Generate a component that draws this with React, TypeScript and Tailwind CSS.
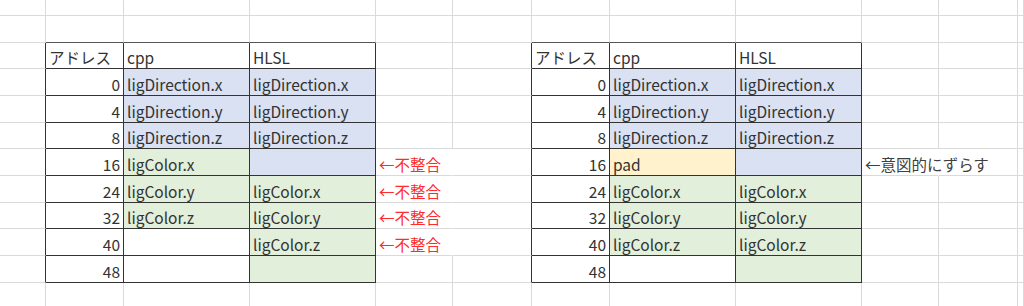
const FONT = "font-['Noto_Sans_CJK_JP',sans-serif]";

const BLUE = 'bg-[#d9e1f2]';
const GREEN = 'bg-[#e2efda]';
const YELLOW = 'bg-[#fff2cc]';

type Cell = { text?: string; bg?: string; align?: 'left' | 'right'; tone?: 'red' | 'gray' };

// one table = 9 rows x 3 cols (address, cpp, HLSL)
const leftTable: Cell[][] = [
  [{ text: 'アドレス' }, { text: 'cpp' }, { text: 'HLSL' }],
  [{ text: '0', align: 'right' }, { text: 'ligDirection.x', bg: BLUE }, { text: 'ligDirection.x', bg: BLUE }],
  [{ text: '4', align: 'right' }, { text: 'ligDirection.y', bg: BLUE }, { text: 'ligDirection.y', bg: BLUE }],
  [{ text: '8', align: 'right' }, { text: 'ligDirection.z', bg: BLUE }, { text: 'ligDirection.z', bg: BLUE }],
  [{ text: '16', align: 'right' }, { text: 'ligColor.x', bg: GREEN }, { bg: BLUE }],
  [{ text: '24', align: 'right' }, { text: 'ligColor.y', bg: GREEN }, { text: 'ligColor.x', bg: GREEN }],
  [{ text: '32', align: 'right' }, { text: 'ligColor.z', bg: GREEN }, { text: 'ligColor.y', bg: GREEN }],
  [{ text: '40', align: 'right' }, {}, { text: 'ligColor.z', bg: GREEN }],
  [{ text: '48', align: 'right' }, {}, { bg: GREEN }],
];

const rightTable: Cell[][] = [
  [{ text: 'アドレス' }, { text: 'cpp' }, { text: 'HLSL' }],
  [{ text: '0', align: 'right' }, { text: 'ligDirection.x', bg: BLUE }, { text: 'ligDirection.x', bg: BLUE }],
  [{ text: '4', align: 'right' }, { text: 'ligDirection.y', bg: BLUE }, { text: 'ligDirection.y', bg: BLUE }],
  [{ text: '8', align: 'right' }, { text: 'ligDirection.z', bg: BLUE }, { text: 'ligDirection.z', bg: BLUE }],
  [{ text: '16', align: 'right' }, { text: 'pad', bg: YELLOW }, { bg: BLUE }],
  [{ text: '24', align: 'right' }, { text: 'ligColor.x', bg: GREEN }, { text: 'ligColor.x', bg: GREEN }],
  [{ text: '32', align: 'right' }, { text: 'ligColor.y', bg: GREEN }, { text: 'ligColor.y', bg: GREEN }],
  [{ text: '40', align: 'right' }, { text: 'ligColor.z', bg: GREEN }, { text: 'ligColor.z', bg: GREEN }],
  [{ text: '48', align: 'right' }, {}, { bg: GREEN }],
];

const ROWS = 12;
const COLS = 12;

function inTable(r: number, c: number) {
  if (r < 2 || r > 10) return false;
  return (c >= 1 && c <= 3) || (c >= 6 && c <= 8);
}

function cellAt(r: number, c: number): Cell {
  if (r >= 2 && r <= 10) {
    if (c >= 1 && c <= 3) return leftTable[r - 2][c - 1];
    if (c >= 6 && c <= 8) return rightTable[r - 2][c - 6];
    if (c === 4 && r >= 6 && r <= 9) return { text: '←不整合', tone: 'red' };
    if (c === 9 && r === 6) return { text: '←意図的にずらす', tone: 'gray' };
  }
  return {};
}

function SheetCell({ r, c }: { r: number; c: number }) {
  const cell = cellAt(r, c);
  const darkRight = inTable(r, c) || inTable(r, c + 1);
  const darkBottom = inTable(r, c) || inTable(r + 1, c);
  const overflowing = !!cell.tone;

  const rightBorder = darkRight
    ? 'border-r-[#333333]'
    : overflowing
      ? 'border-r-transparent'
      : 'border-r-[#dadada]';
  // header's top edge reads a touch lighter in the sheet
  const bottomBorder = darkBottom
    ? r === 1
      ? 'border-b-[#555555]'
      : 'border-b-[#333333]'
    : 'border-b-[#dadada]';

  const color =
    cell.tone === 'red' ? 'text-[#ff2a2a]' : cell.tone === 'gray' ? 'text-[#404040]' : 'text-[#333333]';

  return (
    <div
      className={`flex items-end border-r border-b pb-[1px] ${rightBorder} ${bottomBorder} ${cell.bg ?? ''} ${
        cell.align === 'right' ? 'justify-end pr-[3px]' : 'justify-start pl-[3px]'
      }`}
    >
      {cell.text && (
        <span className={`whitespace-nowrap text-[15.5px] leading-[20px] ${color}`}>{cell.text}</span>
      )}
    </div>
  );
}

export default function App() {
  const cells = [];
  for (let r = 0; r < ROWS; r++) {
    for (let c = 0; c < COLS; c++) {
      cells.push(<SheetCell key={`${r}-${c}`} r={r} c={c} />);
    }
  }

  return (
    <div className={`w-[1024px] h-[306px] overflow-hidden bg-white ${FONT}`}>
      <div className="grid grid-cols-[46px_78px_126px_126px_77px_79px_78px_126px_126px_77px_79px_1fr] grid-rows-[16px_27px_26px_27px_27px_26px_27px_27px_26px_27px_27px_30px]">
        {cells}
      </div>
    </div>
  );
}
